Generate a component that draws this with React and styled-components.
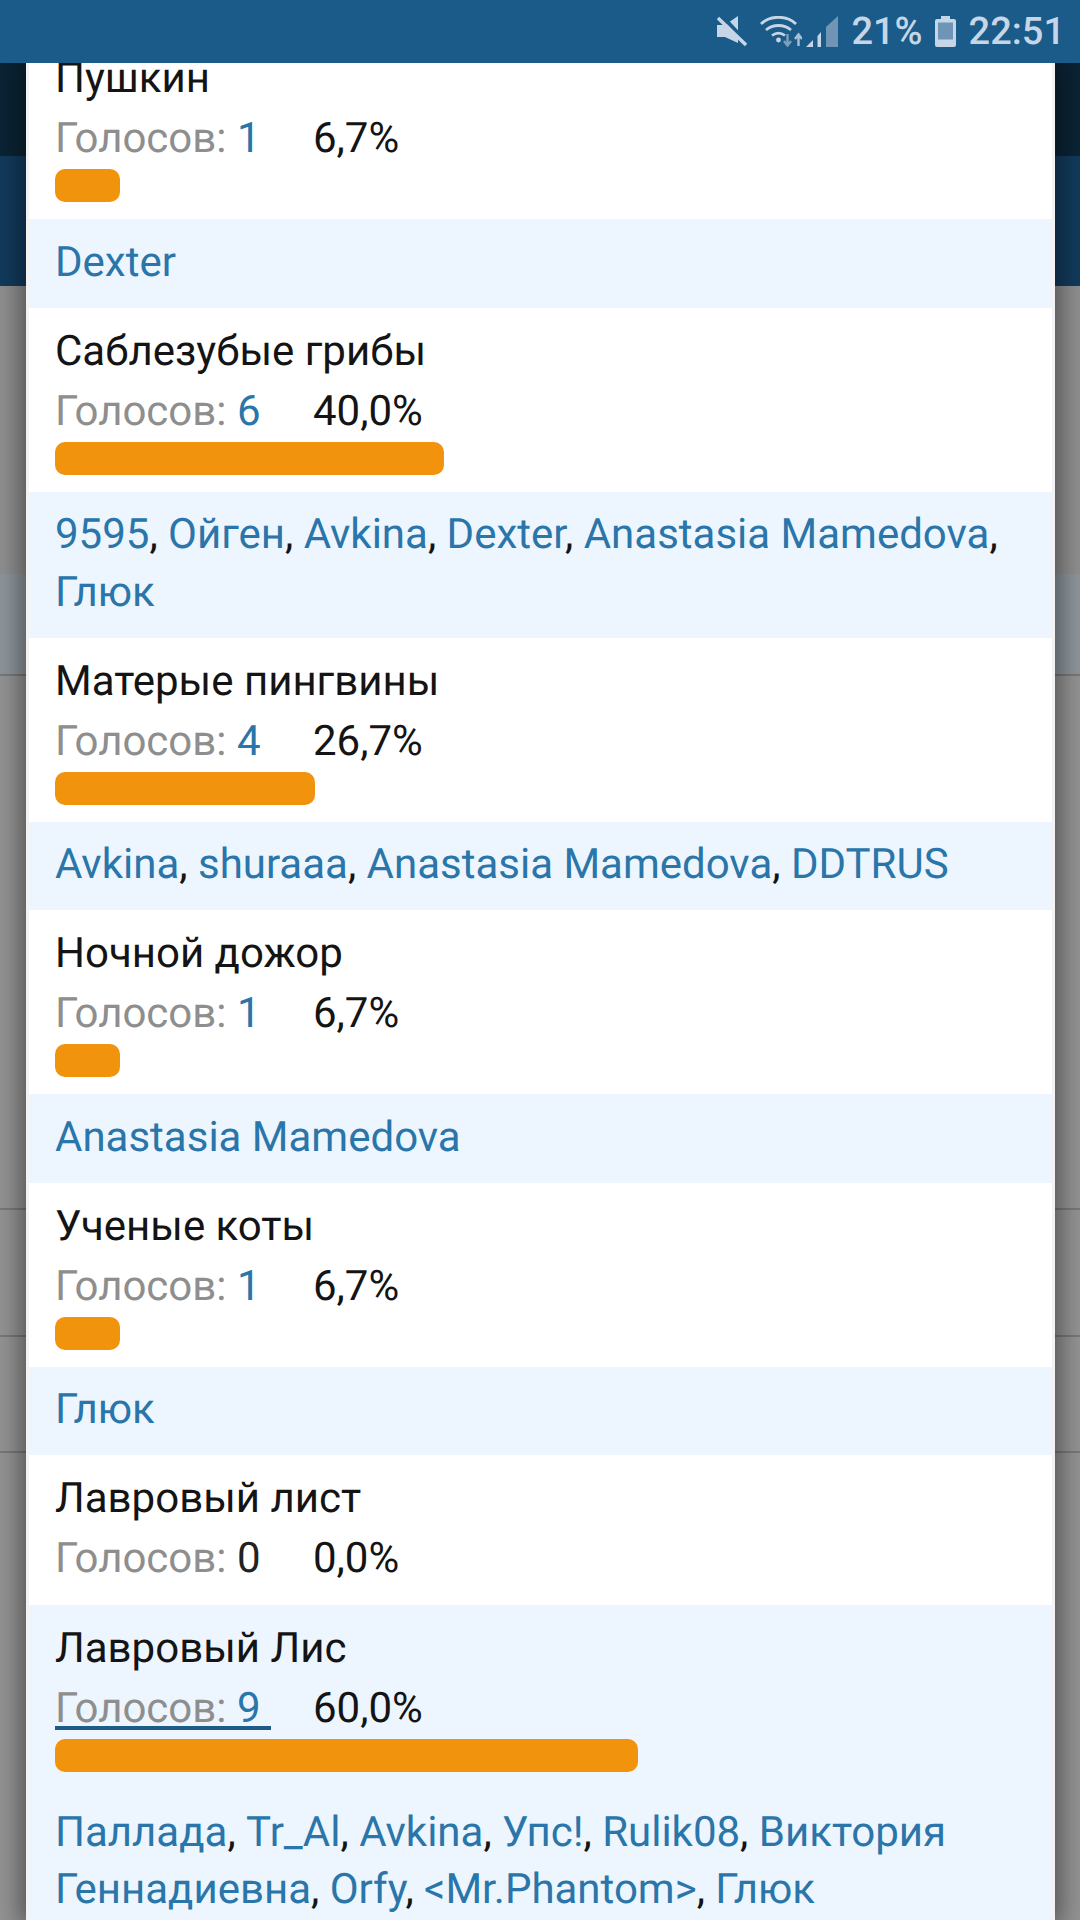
import React from 'react';
import styled, { createGlobalStyle } from 'styled-components';

const Global = createGlobalStyle`
  html, body { margin: 0; padding: 0; background: #8f8f8f; }
  #root { width: 1080px; height: 1920px; overflow: hidden; }
  * { box-sizing: border-box; }
`;

const Screen = styled.div`
  position: relative;
  width: 1080px;
  height: 1920px;
  overflow: hidden;
  display: flex;
  flex-direction: column;
  font-family: Roboto, "Noto Sans", sans-serif;
  text-rendering: geometricPrecision;
`;

const StatusBar = styled.div`
  height: 63px;
  flex: none;
  background: #1a5b89;
  color: #c6d6e6;
  display: flex;
  align-items: center;
  justify-content: flex-end;
  padding-right: 15px;
  position: relative;
  z-index: 2;
`;

const StatusText = styled.span`
  font-size: 38px;
  font-weight: 500;
  line-height: 1;
  margin-left: ${p => p.$gap || 0}px;
`;

const StatusIcon = styled.svg`
  display: block;
  flex: none;
  margin-left: ${p => p.$gap || 0}px;
`;

const Backdrop = styled.div`
  flex: 1;
  display: flex;
  flex-direction: column;
`;

const Band = styled.div`
  height: ${p => p.$h}px;
  background: ${p => p.$bg};
  border-bottom: ${p => (p.$line ? `2px solid ${p.$line}` : 'none')};
  flex: ${p => (p.$h ? 'none' : 1)};
`;

const Modal = styled.div`
  position: absolute;
  left: 26px;
  top: 63px;
  width: 1029px;
  height: 1857px;
  overflow: hidden;
  background: #fff;
  border-left: 3px solid #f3f3f3;
  border-right: 3px solid #f3f3f3;
  box-shadow: 0 0 22px 6px rgba(0, 0, 0, 0.42);
  z-index: 1;
`;

const Scroller = styled.div`
  margin-top: -28px;
  display: flex;
  flex-direction: column;
`;

const Option = styled.div`
  background: ${p => (p.$selected ? '#edf5fe' : '#fff')};
  padding: 20px 26px 17px;
`;

const OptionName = styled.div`
  font-size: 42px;
  line-height: 48px;
  color: #141414;
`;

const Stats = styled.div`
  display: flex;
  align-items: flex-start;
  margin: 12px 0 5px;
  height: 48px;
  font-size: 42px;
  line-height: 48px;
`;

const Votes = styled.a`
  flex: none;
  width: 216px;
  margin-right: 42px;
  color: #8e8e8e;
  height: 45px;
  white-space: nowrap;
  border-bottom: ${p => (p.$active ? '4px solid #1c5c86' : 'none')};
`;

const Count = styled.span`
  color: ${p => (p.$zero ? '#222' : '#2a75a9')};
`;

const Percent = styled.span`
  color: #141414;
`;

const Bar = styled.div`
  height: 33px;
  margin-top: 6px;
  border-radius: 10px;
  background: #f2930e;
`;

const Voters = styled.div`
  background: #edf5fe;
  padding: 14.5px 26px 16.5px;
  font-size: 42px;
  line-height: 57.5px;
  color: #141414;
`;

const VoterLink = styled.a`
  color: #2a75a9;
`;

const options = [
  { name: 'Пушкин', count: 1, pct: '6,7%', width: 65, voters: ['Dexter'] },
  { name: 'Саблезубые грибы', count: 6, pct: '40,0%', width: 389, voters: ['9595', 'Ойген', 'Avkina', 'Dexter', 'Anastasia Mamedova', 'Глюк'] },
  { name: 'Матерые пингвины', count: 4, pct: '26,7%', width: 260, voters: ['Avkina', 'shuraaa', 'Anastasia Mamedova', 'DDTRUS'] },
  { name: 'Ночной дожор', count: 1, pct: '6,7%', width: 65, voters: ['Anastasia Mamedova'] },
  { name: 'Ученые коты', count: 1, pct: '6,7%', width: 65, voters: ['Глюк'] },
  { name: 'Лавровый лист', count: 0, pct: '0,0%', width: 0, voters: [] },
  { name: 'Лавровый Лис', count: 9, pct: '60,0%', width: 583, selected: true, voters: ['Паллада', 'Tr_Al', 'Avkina', 'Упс!', 'Rulik08', 'Виктория Геннадиевна', 'Orfy', '<Mr.Phantom>', 'Глюк'] },
];

const VoterList = ({ names }) => (
  <Voters>
    {names.map((n, i) => (
      <React.Fragment key={n}>
        {i > 0 && ', '}
        <VoterLink>{n}</VoterLink>
      </React.Fragment>
    ))}
  </Voters>
);

const OptionRow = ({ o }) => (
  <Option $selected={o.selected}>
    <OptionName>{o.name}</OptionName>
    <Stats>
      <Votes $active={o.selected}>
        Голосов: <Count $zero={o.count === 0}>{o.count}</Count>
      </Votes>
      <Percent>{o.pct}</Percent>
    </Stats>
    {o.width > 0 && <Bar style={{ width: o.width }} />}
  </Option>
);

const MuteIcon = () => (
  <StatusIcon width="30" height="31" viewBox="0 0 30 31" fill="#c6d6e6">
    <path d="M0 9h8L21 0v27L8 21H0z" />
    <path d="M5 0l25 27" stroke="#1a5b89" strokeWidth="4" fill="none" />
    <path d="M1 2l28 27" stroke="#c6d6e6" strokeWidth="3.4" fill="none" />
  </StatusIcon>
);

const WifiIcon = () => (
  <StatusIcon $gap={13} width="42" height="31" viewBox="0 0 42 31" fill="none">
    <path d="M1 8C10-1 27-1 36 8" stroke="#c6d6e6" strokeWidth="2.8" />
    <path d="M6 14c7-6 18-6 25 0" stroke="#c6d6e6" strokeWidth="2.8" />
    <path d="M12 19.5c4-3 9-3 13 0" stroke="#c6d6e6" strokeWidth="2.8" />
    <circle cx="18.5" cy="24" r="2.4" fill="#c6d6e6" />
    <path d="M27.5 18v11M24 25l3.5 4.5L31 25" stroke="#7f9fbc" strokeWidth="2.4" />
    <path d="M38.5 30V19M35 23l3.5-4.5L42 23" stroke="#a9c0d6" strokeWidth="2.4" />
  </StatusIcon>
);

const SignalIcon = () => (
  <StatusIcon $gap={4} width="32" height="31" viewBox="0 0 32 31">
    <path d="M32 0v31H20V11z" fill="#7195b5" />
    <path d="M0 31l7-7v7z" fill="#c6d6e6" />
    <path d="M11.500 31V20l3.500-4v15z" fill="#c6d6e6" />
  </StatusIcon>
);

const BatteryIcon = () => (
  <StatusIcon $gap={12} width="21" height="31" viewBox="0 0 21 31">
    <path d="M6 0h9v3h4a2 2 0 0 1 2 2v24a2 2 0 0 1-2 2H2a2 2 0 0 1-2-2V5a2 2 0 0 1 2-2h4z" fill="#c6d6e6" />
    <rect x="3" y="6.500" width="15" height="17" fill="#6f94b5" />
  </StatusIcon>
);

export default function App() {
  return (
    <Screen>
      <Global />
      <StatusBar>
        <MuteIcon />
        <WifiIcon />
        <SignalIcon />
        <StatusText $gap={13}>21%</StatusText>
        <BatteryIcon />
        <StatusText $gap={13}>22:51</StatusText>
      </StatusBar>
      <Backdrop>
        <Band $h={93} $bg="#0b2334" />
        <Band $h={130} $bg="#123a5b" />
        <Band $h={288} $bg="#8e8e8e" />
        <Band $h={102} $bg="#8c949a" $line="#777" />
        <Band $h={534} $bg="#929292" $line="#777" />
        <Band $h={127} $bg="#929292" $line="#777" />
        <Band $h={116} $bg="#929292" $line="#777" />
        <Band $bg="#929292" />
      </Backdrop>
      <Modal>
        <Scroller>
          {options.map(o => (
            <React.Fragment key={o.name}>
              <OptionRow o={o} />
              {o.voters.length > 0 && <VoterList names={o.voters} />}
            </React.Fragment>
          ))}
        </Scroller>
      </Modal>
    </Screen>
  );
}
